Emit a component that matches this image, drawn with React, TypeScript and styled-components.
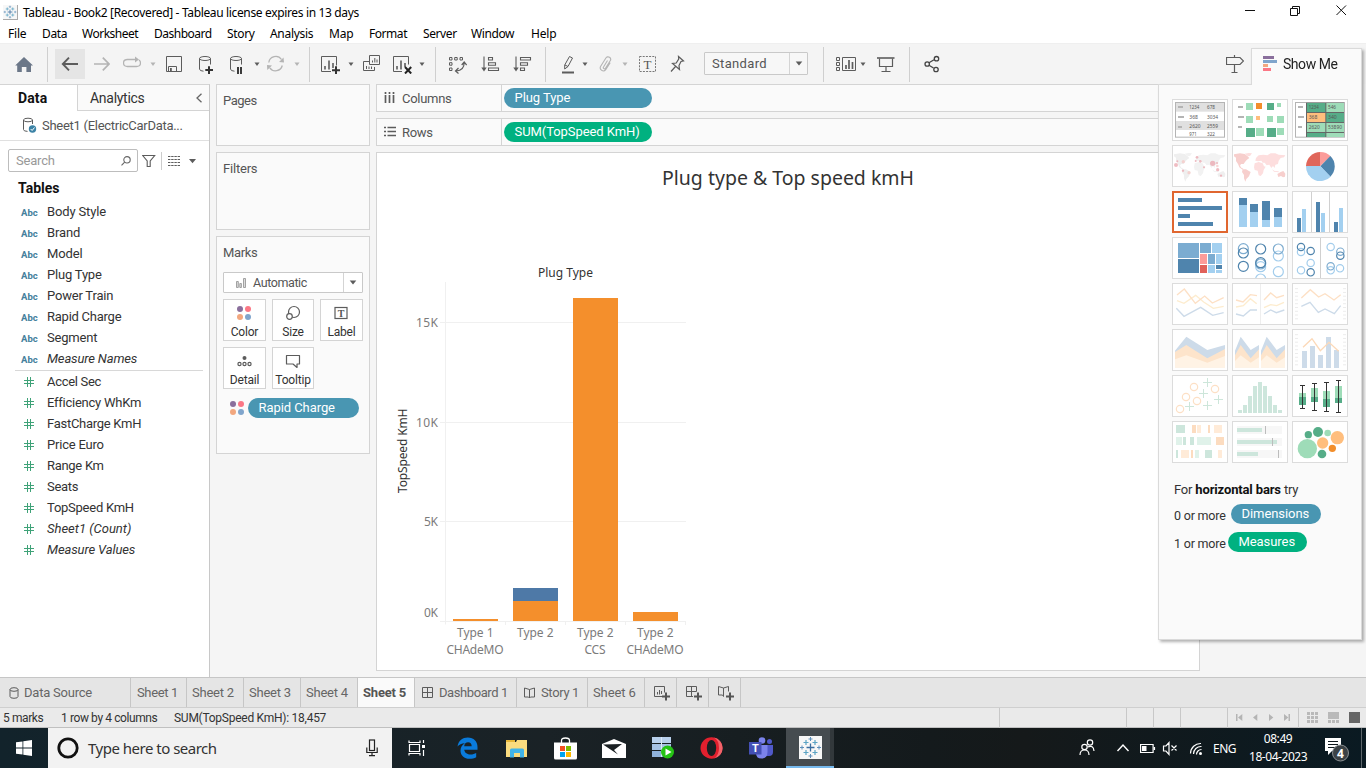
import React from 'react';
import styled, { createGlobalStyle, css } from 'styled-components';

const ui = `Roboto, "Liberation Sans", sans-serif`;
const sys = `"Noto Sans", "Open Sans", sans-serif`;
const line = '#d4d4d4';
const blue = '#4996b2';
const green = '#00b180';

const Global = createGlobalStyle`
  *, *::before, *::after { box-sizing: border-box; }
  body { margin: 0; overflow: hidden; background: #f5f5f5; }
  svg { display: block; flex: none; }
`;

/* ---------- window frame ---------- */
const Window = styled.div`
  position: relative;
  width: 1366px;
  height: 768px;
  display: flex;
  flex-direction: column;
  overflow: hidden;
  font: 13px ${ui};
  color: #333;
  background: #f5f5f5;
`;
const TitleBar = styled.header`
  height: 24px;
  display: flex;
  align-items: center;
  background: #fff;
  padding-left: 3px;
  font: 12px ${sys};
  color: #000;
`;
const TitleText = styled.span`
  margin-left: 5px;
  flex: 1;
  letter-spacing: -0.35px;
`;
const WindowControls = styled.div`
  width: 121px;
`;
const MenuBar = styled.nav`
  height: 19px;
  display: flex;
  align-items: center;
  background: #fff;
  font: 12px ${sys};
  color: #000;
`;
const MenuItem = styled.span<{ $w: number; $ls: number }>`
  width: ${p => p.$w}px;
  white-space: nowrap;
  letter-spacing: ${p => p.$ls}px;
  &:first-child { margin-left: 8px; }
`;

/* ---------- toolbar ---------- */
const ToolbarRow = styled.div`
  height: 41px;
  display: flex;
  align-items: flex-start;
  border-top: 1px solid #efefef;
  background: #f4f4f4;
`;
const Slot = styled.div<{ $gap: number; $w: number }>`
  flex: none;
  margin: 10px 0 0 ${p => p.$gap}px;
  width: ${p => p.$w}px;
  height: 20px;
`;
const Divider = styled.div<{ $gap: number }>`
  flex: none;
  width: 1px;
  height: 35px;
  margin: 3px 0 0 ${p => p.$gap}px;
  background: #cfcfcf;
`;
const ActiveTool = styled.div`
  flex: none;
  width: 30px;
  height: 30px;
  margin: 5px 0 0 7px;
  padding: 5px 5px;
  background: #e5e5e5;
`;
const SelectBox = styled.div<{ $w: number; $h: number; $muted?: boolean }>`
  flex: none;
  display: flex;
  align-items: center;
  width: ${p => p.$w}px;
  height: ${p => p.$h}px;
  border: 1px solid #c9c9c9;
  border-radius: 1px;
  background: ${p => (p.$muted ? '#f7f7f7' : '#fff')};
  color: #555;
`;
const SelectArrow = styled.div<{ $w: number }>`
  width: ${p => p.$w}px;
  height: 100%;
  margin-left: auto;
  display: flex;
  align-items: center;
  justify-content: center;
  border-left: 1px solid ${line};
`;
const StandardSelect = styled(SelectBox)`
  margin: 8px 0 0 19px;
  padding-left: 7px;
  font-size: 13px;
  letter-spacing: 0.35px;
`;

const Icon = ({ box, children, color = '#5c5c5c' }: { box: string; children: React.ReactNode; color?: string }) => {
  const [, , w, h] = box.split(' ');
  return (
    <svg width={w} height={h} viewBox={box} fill="none" stroke={color} strokeWidth="1">
      {children}
    </svg>
  );
};
const Tool = ({ gap, x, w, color, children }: { gap: number; x: number; w: number; color?: string; children: React.ReactNode }) => (
  <Slot $gap={gap} $w={w}>
    <Icon box={`${x} 54 ${w} 20`} color={color}>{children}</Icon>
  </Slot>
);
const Caret = ({ gap, off }: { gap: number; off?: boolean }) => (
  <Slot $gap={gap} $w={6}>
    <svg width="6" height="20" viewBox="0 0 6 20"><path d="M.5 8.5h5l-2.500 3.500z" fill={off ? '#b4b4b4' : '#5c5c5c'} /></svg>
  </Slot>
);
const DownArrow = () => (
  <svg width="8" height="5" viewBox="0 0 8 5"><path d="M.7 .5h6.6l-3.3 4z" fill="#5c5c5c" /></svg>
);

const Toolbar = () => (
  <ToolbarRow>
    <Tool gap={15} x={15} w={18}>
      <path d="M24 57L33 65.4h-2V72h-4.6v-5h-4.6v5h-4.6v-6.6h-2z" fill="#6b7788" stroke="none" />
    </Tool>
    <Divider $gap={14} />
    <ActiveTool>
      <Icon box="60 54 20 20"><path d="M63 64H78M69 57.7L62.8 64l6.2 6.3" strokeWidth="1.9" /></Icon>
    </ActiveTool>
    <Tool gap={9} x={94} w={16} color="#b4b4b4"><path d="M94 64h15M102.8 57.7L109 64l-6.2 6.3" strokeWidth="1.7" /></Tool>
    <Tool gap={13} x={123} w={18} color="#b4b4b4">
      <path d="M139 60q1.500 1 1.500 3q0 3.500-4 3.500h-9q-4 0-4-3.500t4-3.500h9.500" strokeWidth="1.3" />
      <path d="M135 56.500l4 3-4 3z" fill="#b4b4b4" stroke="none" />
    </Tool>
    <Caret gap={9} off />
    <Tool gap={10} x={166} w={16}>
      <path d="M166.500 56.500h15v15h-15zM168.500 71.500v-5h8v5" />
      <path d="M170 68h1.800v3h-1.800z" fill="#5c5c5c" stroke="none" />
    </Tool>
    <Tool gap={17} x={199} w={15}>
      <ellipse cx="205" cy="58.500" rx="5.500" ry="2" />
      <path d="M199.500 58.500V69q0 2 4 2.200M210.500 58.500V64.500" />
      <path d="M205.300 70h7.700M209 66.200v7.700" stroke="#333" strokeWidth="2" />
    </Tool>
    <Tool gap={16} x={230} w={13}>
      <ellipse cx="236" cy="58.500" rx="5.500" ry="2" />
      <path d="M230.500 58.500V69q0 2 4 2.200M241.500 58.500V64.500" />
      <path d="M238 67v7M241 67v7" stroke="#333" strokeWidth="1.900" />
    </Tool>
    <Caret gap={11} />
    <Tool gap={7} x={267} w={18} color="#b4b4b4">
      <path d="M268.800 62.500A7 7 0 0 1 281.500 59.500M282.300 65.500A7 7 0 0 1 269.800 67.800" strokeWidth="1.300" />
      <path d="M283.500 57.500l.5 5-5-.5zM267.300 70l-.3-5 5 .5z" fill="#b4b4b4" stroke="none" />
    </Tool>
    <Caret gap={9} off />
    <Divider $gap={9} />
    <Tool gap={11} x={321} w={20}>
      <path d="M331 71.500h-9.500v-15h15v9" />
      <path d="M325 66v3.500M329 60.500v9M333 63v5" strokeWidth="1.600" />
      <path d="M332 70.200h8M336 66.200v8" stroke="#333" strokeWidth="2" />
    </Tool>
    <Caret gap={7} />
    <Tool gap={9} x={363} w={18}>
      <path d="M369 61.500h-5.500v9h11v-3.500M369.500 55.500h10v9h-10z" />
      <path d="M366.500 66v3M369 66.500v2.500M371.500 66.500v2.500M372.500 60.500v2M374.800 58v4.500M377 59.500v3" />
    </Tool>
    <Tool gap={12} x={393} w={19}>
      <path d="M402 71.500h-8.500v-15h15v8" />
      <path d="M397 66v3.500M401 60.500v9M405 63v4" strokeWidth="1.600" />
      <path d="M405 67l6.200 6.500M411.200 67l-6.200 6.500" stroke="#222" strokeWidth="2" />
    </Tool>
    <Caret gap={7} />
    <Divider $gap={10} />
    <Tool gap={12} x={448} w={19}>
      <path d="M449.500 57.500h2.500v2.500h-2.500zM454.700 57.500h2.500v2.500h-2.500zM460 57.500h2.500v2.500h-2.500zM449.500 62.700h2.500v2.500h-2.500zM449.500 68h2.500v2.500h-2.500z" />
      <path d="M464.200 62.500q0 8-8 8.500M461.700 65l2.500-3 2.500 3M458.500 68l-3 3 3 2.500" strokeWidth="1.200" />
    </Tool>
    <Tool gap={14} x={481} w={19}>
      <path d="M484 56.500V70M488.500 57.500h4v2.500h-4zM488.500 62.700h7v2.500h-7zM488.500 68h10v2.500h-10z" strokeWidth="1.100" />
      <path d="M481.300 67.500h5.400l-2.700 4z" fill="#5c5c5c" stroke="none" />
    </Tool>
    <Tool gap={13} x={513} w={19}>
      <path d="M516 56.500V70M520.500 57.500h10v2.500h-10zM520.500 62.700h7v2.500h-7zM520.500 68h4v2.500h-4z" strokeWidth="1.100" />
      <path d="M513.300 67.500h5.400l-2.700 4z" fill="#5c5c5c" stroke="none" />
    </Tool>
    <Divider $gap={13} />
    <Tool gap={15} x={561} w={14}>
      <path d="M569.500 56.500l3 1.500-4.500 8.500-3.300 2.500v-4zM565 65l3 1.500" />
      <path d="M562 72.500h12" strokeWidth="2" />
    </Tool>
    <Caret gap={7} />
    <Tool gap={10} x={598} w={14} color="#b4b4b4">
      <path d="M607.500 60.500l-4 6.500a1 1 0 0 0 2 1.300l4.700-7.500a2.500 2.500 0 0 0-4.300-2.800l-5.200 8.300a3 3 0 0 0 5 3.300l4.500-7" strokeWidth="1.100" />
    </Tool>
    <Caret gap={10} off />
    <Tool gap={11} x={639} w={18}>
      <rect x="639.500" y="56.500" width="16" height="15" strokeDasharray="2 1.200" stroke="#777" />
      <text x="647.500" y="68.500" textAnchor="middle" fontFamily="Liberation Serif" fontSize="13" fill="#555" stroke="none">T</text>
    </Tool>
    <Tool gap={13} x={670} w={15}>
      <path d="M678.500 56.500l5 4.500-2.500.5-2 4 .5 4-7-6 3.700-.5 2.500-4zM675.500 66.500l-4.500 5" strokeWidth="1.200" />
    </Tool>
    <StandardSelect $w={104} $h={23} $muted>Standard<SelectArrow $w={18}><DownArrow /></SelectArrow></StandardSelect>
    <Divider $gap={15} />
    <Tool gap={11} x={835} w={21}>
      <path d="M836.500 57.500h3v3h-3zM836.500 62.500h3v3h-3zM836.500 67.500h3v3h-3zM842.500 57.500h13v13h-13z" />
      <path d="M846 65v4M849 60v9M852.500 62v7" strokeWidth="1.700" />
    </Tool>
    <Caret gap={4} />
    <Tool gap={10} x={876} w={19}>
      <path d="M877 58h17.500" strokeWidth="1.600" />
      <path d="M879.500 58.500v8h13v-8M886 66.500v5M881.500 71.500h9" strokeWidth="1.200" />
    </Tool>
    <Divider $gap={14} />
    <Tool gap={14} x={924} w={17} color="#444">
      <path d="M929 62.800l5-3M929 65.300l4.500 2.700" strokeWidth="1.300" />
      <circle cx="927.200" cy="64" r="2.200" strokeWidth="1.300" /><circle cx="936.500" cy="58.700" r="2.200" strokeWidth="1.300" /><circle cx="936" cy="69.500" r="2.200" strokeWidth="1.300" />
    </Tool>
    <Tool gap={285} x={1226} w={18}>
      <path d="M1226.500 57.500h13.500l3.500 3.500-3.500 3.500h-13.500zM1234.500 55v2.500M1234.500 64.500v8M1231.500 72.500h6" strokeWidth="1.200" />
    </Tool>
  </ToolbarRow>
);

/* ---------- data pane ---------- */
const Main = styled.main`
  height: 593px;
  display: flex;
`;
const DataPane = styled.aside`
  width: 210px;
  border-right: 1px solid #c8c8c8;
  border-top: 1px solid ${line};
  background: #fff;
  display: flex;
  flex-direction: column;
`;
const PaneTabs = styled.div`
  display: flex;
  height: 26px;
  font-size: 14px;
`;
const DataTab = styled.div`
  width: 77px;
  padding-left: 18px;
  line-height: 26px;
  font-weight: 700;
  color: #111;
  letter-spacing: 0.1px;
`;
const AnalyticsTab = styled.div`
  flex: 1;
  display: flex;
  align-items: center;
  justify-content: space-between;
  border-left: 1px solid ${line};
  border-bottom: 1px solid ${line};
  background: #fafafa;
  padding: 0 6px 0 12px;
  letter-spacing: -0.28px;
`;
const SourceRow = styled.div`
  height: 30px;
  display: flex;
  align-items: center;
  padding-left: 22px;
  gap: 5px;
  border-bottom: 1px solid #e0e0e0;
  font-size: 13px;
  letter-spacing: -0.28px;
  color: #555;
`;
const SearchRow = styled.div`
  display: flex;
  align-items: center;
  padding: 8px 0 0 8px;
  height: 31px;
`;
const SearchBox = styled.div`
  width: 130px;
  height: 23px;
  display: flex;
  align-items: center;
  justify-content: space-between;
  padding: 0 5px 0 7px;
  border: 1px solid #bdbdbd;
  border-radius: 2px;
  color: #999;
  letter-spacing: -0.2px;
`;
const SearchTools = styled.div`
  margin-left: 4px;
`;
const TablesTitle = styled.div`
  margin-top: 7px;
  height: 19px;
  line-height: 19px;
  padding-left: 18px;
  font-size: 14px;
  font-weight: 700;
  color: #111;
`;
const FieldList = styled.div<{ $top?: number }>`
  padding-top: ${p => p.$top ?? 0}px;
`;
const Rule = styled.hr`
  height: 1px;
  border: 0;
  margin: 1px 6px 0 15px;
  background: #d8d8d8;
`;
const Field = styled.div`
  height: 21px;
  display: flex;
  align-items: center;
`;
const FieldName = styled.span<{ $italic?: boolean; $ls: number }>`
  font-style: ${p => (p.$italic ? 'italic' : 'normal')};
  letter-spacing: ${p => p.$ls}px;
  white-space: nowrap;
  color: #333;
`;
const TypeAbc = styled.span`
  width: 26px;
  margin-left: 21px;
  padding-top: 1px;
  font: 700 9.5px ${ui};
  color: #44809c;
`;
const TypeHash = styled.span`
  width: 23px;
  margin-left: 24px;
`;

const dims: [string, number][] = [['Body Style', -0.15], ['Brand', -0.1], ['Model', -0.1], ['Plug Type', -0.2], ['Power Train', -0.2], ['Rapid Charge', -0.25], ['Segment', -0.2], ['Measure Names', -0.15]];
const measures: [string, number][] = [['Accel Sec', -0.3], ['Efficiency WhKm', -0.25], ['FastCharge KmH', -0.28], ['Price Euro', -0.2], ['Range Km', -0.3], ['Seats', -0.3], ['TopSpeed KmH', -0.25], ['Sheet1 (Count)', 0], ['Measure Values', -0.12]];

const Data = () => (
  <DataPane>
    <PaneTabs>
      <DataTab>Data</DataTab>
      <AnalyticsTab>Analytics
        <svg width="8" height="10" viewBox="0 0 8 10"><path d="M6.500 .8L2 5l4.500 4.200" fill="none" stroke="#666" strokeWidth="1.300" /></svg>
      </AnalyticsTab>
    </PaneTabs>
    <SourceRow>
      <Icon box="22 117 15 17">
        <ellipse cx="28" cy="120" rx="4.500" ry="1.800" />
        <path d="M23.500 120v9.500q0 1.800 4 1.900M32.500 120v4" />
        <circle cx="32.500" cy="129" r="3.700" fill="#3c83a6" stroke="none" />
        <path d="M30.700 129l1.400 1.500 2.400-3" stroke="#fff" />
      </Icon>
      Sheet1 (ElectricCarData...
    </SourceRow>
    <SearchRow>
      <SearchBox>Search
        <svg width="12" height="12" viewBox="0 0 12 12" fill="none" stroke="#666" strokeWidth="1.100"><circle cx="7" cy="4.800" r="3.200" /><path d="M4.700 7.200L1.500 10.400" /></svg>
      </SearchBox>
      <SearchTools>
        <Icon box="142 150 56 20">
          <path d="M142.700 154.500h12l-4.500 5.500v5.500h-3v-5.500z" strokeWidth="1.100" />
          <path d="M161.500 151v18" stroke="#ccc" />
          <path d="M168 155.500h12M168 158.500h12M168 161.500h12M168 164.500h12" strokeDasharray="2.400 .8" />
          <path d="M189 158h7l-3.500 4.200z" fill="#5c5c5c" stroke="none" />
        </Icon>
      </SearchTools>
    </SearchRow>
    <TablesTitle>Tables</TablesTitle>
    <FieldList $top={3}>
      {dims.map(([n, ls], i) => <Field key={n}><TypeAbc>Abc</TypeAbc><FieldName $ls={ls} $italic={i === 7}>{n}</FieldName></Field>)}
    </FieldList>
    <Rule />
    <FieldList>
      {measures.map(([n, ls], i) => (
        <Field key={n}>
          <TypeHash><svg width="10" height="11" viewBox="0 0 10 11"><path d="M3.500 1v10M6.500 1v10M0 4.500h10M0 7.500h10" stroke="#3fa278" strokeWidth="1" fill="none" /></svg></TypeHash>
          <FieldName $ls={ls} $italic={i > 6}>{n}</FieldName>
        </Field>
      ))}
    </FieldList>
  </DataPane>
);

/* ---------- cards ---------- */
const Cards = styled.div`
  width: 154px;
  margin-left: 6px;
  display: flex;
  flex-direction: column;
  gap: 6px;
`;
const Card = styled.section<{ $h: number }>`
  height: ${p => p.$h}px;
  border: 1px solid ${line};
  background: #fafafa;
  padding: 7px 6px 0;
`;
const CardTitle = styled.h3<{ $ls: number }>`
  margin: 0;
  height: 16px;
  line-height: 17px;
  font-size: 13px;
  font-weight: 400;
  color: #555;
  letter-spacing: ${p => p.$ls}px;
`;
const MarkSelect = styled(SelectBox)`
  margin: 12px 0 6px;
  padding-left: 12px;
  gap: 7px;
  font-size: 12.500px;
  letter-spacing: -0.4px;
`;
const MarkGrid = styled.div`
  display: grid;
  grid-template-columns: 43px 42px 43px;
  grid-auto-rows: 42px;
  gap: 6px;
`;
const MarkButton = styled.div`
  border: 1px solid ${line};
  background: #fff;
  display: flex;
  flex-direction: column;
  align-items: center;
  justify-content: space-between;
  padding: 4px 0 0;
  font-size: 12px;
  line-height: 15px;
  color: #333;
  white-space: nowrap;
  letter-spacing: -0.2px;
`;
const PillRow = styled.div`
  display: flex;
  align-items: center;
  margin: 9px 0 0 7px;
  gap: 4px;
`;
const Pill = styled.span<{ $w: number; $c: string }>`
  display: inline-block;
  flex: none;
  width: ${p => p.$w}px;
  height: 20px;
  line-height: 19px;
  padding-left: 10.500px;
  border-radius: 10px;
  background: ${p => p.$c};
  color: #fff;
  font-size: 13px;
  white-space: nowrap;
  letter-spacing: -0.07px;
`;
const DotShapes = () => (
  <g>
    <circle cx="3" cy="3" r="3" fill="#8a6f9c" /><circle cx="11" cy="3" r="3" fill="#fb7785" />
    <circle cx="3" cy="11" r="3" fill="#f2a77f" /><circle cx="11" cy="11" r="3" fill="#80a5cc" />
  </g>
);
const MarkIcon = ({ children }: { children: React.ReactNode }) => (
  <svg width="18" height="18" viewBox="0 0 18 18" fill="none" stroke="#5c5c5c" strokeWidth="1.200">{children}</svg>
);

const CardColumn = () => (
  <Cards>
    <Card $h={62}><CardTitle $ls={-0.5}>Pages</CardTitle></Card>
    <Card $h={78}><CardTitle $ls={-0.2}>Filters</CardTitle></Card>
    <Card $h={218}>
      <CardTitle $ls={-0.35}>Marks</CardTitle>
      <MarkSelect $w={140} $h={21}>
        <svg width="10" height="10" viewBox="0 0 10 10" fill="#ddd" stroke="#999" strokeWidth=".9"><path d="M.5 3.500h1.800v6H.5zM3.800 5.500h1.600v4H3.800zM7.500 .5h2v9h-2z" /></svg>
        Automatic
        <SelectArrow $w={19}><DownArrow /></SelectArrow>
      </MarkSelect>
      <MarkGrid>
        <MarkButton><svg width="15" height="18" viewBox="0 -2 15 18"><DotShapes /></svg>Color</MarkButton>
        <MarkButton><MarkIcon><circle cx="10" cy="8" r="5.500" /><circle cx="5.500" cy="12.500" r="2.800" fill="#fff" /></MarkIcon>Size</MarkButton>
        <MarkButton><MarkIcon><rect x="2" y="3.500" width="12" height="11" /><text x="8" y="13" fontSize="10" fontWeight="700" textAnchor="middle" fontFamily="Liberation Serif" fill="#555" stroke="none">T</text></MarkIcon>Label</MarkButton>
        <MarkButton><MarkIcon><circle cx="8.500" cy="6" r="2" fill="#5c5c5c" stroke="none" /><circle cx="3.500" cy="12" r="1.600" /><circle cx="8.500" cy="12" r="1.600" /><circle cx="13.500" cy="12" r="1.600" /></MarkIcon>Detail</MarkButton>
        <MarkButton><MarkIcon><path d="M2.500 3.500h13v8.500h-2.500v3.500l-4-3.500h-6.500z" strokeLinejoin="round" /></MarkIcon>Tooltip</MarkButton>
      </MarkGrid>
      <PillRow><svg width="14" height="14" viewBox="0 0 14 14"><DotShapes /></svg><Pill $w={111} $c={blue}>Rapid Charge</Pill></PillRow>
    </Card>
  </Cards>
);

/* ---------- shelves and view ---------- */
const Work = styled.div`
  width: 824px;
  margin-left: 6px;
  display: flex;
  flex-direction: column;
  gap: 6px;
`;
const Shelf = styled.div`
  height: 28px;
  display: flex;
  align-items: center;
  border: 1px solid ${line};
  background: #fafafa;
`;
const ShelfLabel = styled.div`
  width: 125px;
  height: 26px;
  display: flex;
  align-items: center;
  gap: 6px;
  padding-left: 7px;
  border-right: 1px solid ${line};
  margin-right: 2px;
  color: #555;
  letter-spacing: -0.28px;
`;
const View = styled.div`
  height: 519px;
  border: 1px solid ${line};
  background: #fff;
`;

const bars = [
  { x: 453, y: 619, h: 2, c: '#f48f2c' },
  { x: 513, y: 588, h: 13, c: '#4e79a7' },
  { x: 513, y: 601, h: 20, c: '#f48f2c' },
  { x: 573, y: 298, h: 323, c: '#f48f2c' },
  { x: 633, y: 612, h: 9, c: '#f48f2c' },
];
const Chart = () => (
  <svg width="821" height="517" viewBox="377 153 821 517" fontFamily={sys} fontSize="12" fill="#7b7b7b">
    <text x="662" y="185" fontSize="19.500" fill="#333" textLength="252">Plug type &amp; Top speed kmH</text>
    <text x="538" y="277" fill="#333" textLength="55">Plug Type</text>
    <g stroke="#f0f0f0" strokeWidth="1">
      <path d="M440 322.500H686M440 422.500H686M440 521.500H686M440 621.500H686M445.500 282V624.500M505.500 621v4M565.500 621v4M625.500 621v4M685.500 621v4" />
    </g>
    {bars.map((b, i) => <rect key={i} x={b.x} y={b.y} width="45" height={b.h} fill={b.c} />)}
    <text x="416" y="327" textLength="22">15K</text>
    <text x="416" y="427" textLength="22">10K</text>
    <text x="424" y="526" textLength="14">5K</text>
    <text x="424" y="617" textLength="14">0K</text>
    <text transform="translate(406.500 493) rotate(-90)" fill="#333" textLength="84.500">TopSpeed KmH</text>
    <text x="457" y="637" textLength="36.500">Type 1</text>
    <text x="446.500" y="654" textLength="57">CHAdeMO</text>
    <text x="517" y="637" textLength="36.500">Type 2</text>
    <text x="577" y="637" textLength="36.500">Type 2</text>
    <text x="584.500" y="654" textLength="21">CCS</text>
    <text x="637" y="637" textLength="36.500">Type 2</text>
    <text x="626.500" y="654" textLength="57">CHAdeMO</text>
  </svg>
);

/* ---------- show me ---------- */
const ShowMe = styled.div`
  position: absolute;
  left: 1158px;
  top: 48px;
  width: 204px;
  height: 592px;
  display: flex;
  flex-direction: column;
  filter: drop-shadow(2px 2px 1.500px rgba(0, 0, 0, 0.3));
`;
const ShowMeTab = styled.div`
  align-self: flex-end;
  position: relative;
  z-index: 1;
  width: 111px;
  height: 37px;
  margin-bottom: -1px;
  border: 1px solid #dadada;
  border-bottom: 0;
  background: #fafafa;
  display: flex;
  align-items: center;
  padding: 0 0 6px 11px;
  gap: 5px;
  font-size: 14px;
  letter-spacing: -0.45px;
  color: #222;
`;
const ShowMeBody = styled.div`
  height: 556px;
  border: 1px solid #dadada;
  background: #fafafa;
  padding: 14px 13px 0;
`;
const ThumbGrid = styled.div`
  display: grid;
  grid-template-columns: repeat(3, 56px);
  grid-auto-rows: 42px;
  gap: 4px;
`;
const Thumb = styled.div<{ $on?: boolean }>`
  border: 1px solid #dcdcdc;
  background: #fff;
  ${p => p.$on && css`
    border-color: #e0662f;
    box-shadow: inset 0 0 0 1px #e0662f;
  `}
`;
const HintLine = styled.p<{ $mt: number }>`
  margin: ${p => p.$mt}px 0 0 2px;
  height: 20px;
  display: flex;
  align-items: center;
  white-space: pre;
  font-size: 13px;
  color: #333;
  letter-spacing: -0.2px;
  b { color: #111; letter-spacing: -0.14px; }
`;
const HintText = styled.span<{ $w: number }>`
  width: ${p => p.$w}px;
  padding-top: 3px;
  font-size: 12.500px;
`;

const D = '#4f84ad', L = '#a3d0f0', DG = '#56ad88', LG = '#9edcb8', OR = '#f28e2b', LO = '#ffbe7d';
const R = ({ a, c }: { a: [number, number, number, number][]; c: string }) => (
  <g fill={c}>{a.map((r, i) => <rect key={i} x={r[0]} y={r[1]} width={r[2] - r[0]} height={r[3] - r[1]} />)}</g>
);
const Rings = ({ a, c, r = 15 }: { a: [number, number][]; c: string; r?: number }) => (
  <g fill="none" stroke={c} strokeWidth="3.600">{a.map((p, i) => <circle key={i} cx={p[0]} cy={p[1]} r={r} />)}</g>
);
const Line = ({ d, c }: { d: string; c: string }) => <path d={d} fill="none" stroke={c} strokeWidth="4" />;
const land = [
  'M252 463l18-3 14 2 8 6 6 6-8 6-5 6-4 6-8 0-3 5 4 6 6 3-2 3-10-7-4-10-6-9 0-10-6-4z',
  'M278 508l10 0 14 8-5 13-8 8-3 8-4-10 0-10-6-9z', 'M284 461l12-2 10 1-6 8-6 1z',
  'M314 490l12-4 12 4 4 9 5 1-6 10-2 10-7 8-6-2-3-14-9-2-2-8z',
  'M316 482l2-8 8-8 14-2 12 2 10-6 14 0 10 4 20 2-4 6-10 2-6 8-2 10-8 2-2 10-5-6-5 6-6-10-8 2-6-8-6 0-4-6-10 2z',
  'M382 522l10-6 8-3 6 8-1 9-6 2-6-4-8 3z', 'M366 508l8 5 12 1 0 3-14-2z',
];
const World = ({ x, c, d }: { x: number; c: string; d: string }) => (
  <g transform={`translate(${x} 0)`}>{land.map((p, i) => <path key={i} d={p} fill={i < 2 || i === 5 ? d : c} />)}</g>
);
const Num = ({ x, y, children, w = 30, c = '#555' }: { x: number; y: number; children: string; w?: number; c?: string }) => (
  <text x={x} y={y} fontSize="17" textLength={w} lengthAdjust="spacingAndGlyphs" fontFamily={sys} fill={c}>{children}</text>
);
const ticks = (x: number, y0: number) => Array.from({ length: 9 }, (_, i) => `M${x} ${y0 + i * 11.3}h9`).join('');

const thumbs: { box: [number, number]; on?: boolean; art: React.ReactNode }[] = [
  { box: [66, 297], art: <>
    <rect x="76.500" y="307.500" width="147" height="104" fill="#fff" stroke="#b4b4b4" strokeWidth="3" />
    <R c="#e0e0e0" a={[[78, 309, 222, 335], [78, 363, 222, 390]]} />
    <R c="#b4b4b4" a={[[84, 318, 99, 324], [84, 348, 102, 354], [84, 378, 96, 384]]} />
    <Num x={118} y={328}>1234</Num><Num x={171} y={328} w={24}>678</Num>
    <Num x={118} y={356} w={26}>368</Num><Num x={171} y={356} w={33}>3034</Num>
    <Num x={118} y={383} w={34}>2620</Num><Num x={171} y={383} w={33}>2559</Num>
    <Num x={118} y={407} w={22}>971</Num><Num x={171} y={407} w={24}>322</Num>
  </> },
  { box: [246, 297], art: <>
    <R c="#b4b4b4" a={[[264, 318, 279, 324], [264, 348, 282, 354], [264, 378, 276, 384]]} />
    <R c={LG} a={[[288, 309, 309, 330], [381, 309, 393, 321], [288, 348, 309, 369], [351, 348, 369, 366], [381, 348, 402, 369], [318, 384, 342, 408], [381, 384, 402, 405]]} />
    <R c={DG} a={[[351, 309, 372, 330], [288, 384, 315, 411], [351, 384, 378, 411]]} />
    <R c={OR} a={[[318, 309, 336, 327]]} /><R c={LO} a={[[318, 348, 330, 360]]} />
  </> },
  { box: [426, 297], art: <>
    <rect x="436.500" y="307.500" width="147" height="104" fill="#fff" stroke="#b4b4b4" strokeWidth="3" />
    <R c="#b4b4b4" a={[[444, 318, 459, 324], [444, 348, 462, 354], [444, 378, 456, 384]]} />
    <R c="#666" a={[[468, 308, 582, 411]]} />
    <R c={DG} a={[[471, 309, 526, 336], [529, 339, 582, 366], [471, 399, 526, 411]]} />
    <R c={LG} a={[[529, 309, 582, 336], [471, 369, 526, 396], [529, 369, 582, 396], [529, 399, 582, 411]]} />
    <R c={LO} a={[[471, 339, 526, 366]]} />
    <Num x={476} y={327}>1234</Num><Num x={534} y={327} w={24}>546</Num>
    <Num x={476} y={358} w={26}>368</Num><Num x={534} y={358} w={26}>340</Num>
    <Num x={476} y={388} w={33}>2620</Num><Num x={534} y={388} w={42}>53890</Num>
  </> },
  { box: [66, 435], art: <>
    <World x={-180} c="#f2f2f2" d="#efefef" />
    <g fill="#e9a6ae" fillOpacity=".75"><circle cx="78" cy="495" r="6" /><circle cx="82" cy="484" r="3" /><circle cx="188" cy="490" r="8" /><circle cx="203" cy="509" r="5" /><circle cx="141" cy="472" r="4" /><circle cx="151" cy="484" r="4" /><circle cx="137" cy="483" r="3" /><circle cx="99" cy="512" r="3.500" /><circle cx="162" cy="502" r="3" /><circle cx="213" cy="527" r="3.500" /><circle cx="201" cy="489" r="3" /></g>
    <g fill="#f6c6c3" fillOpacity=".7"><circle cx="100" cy="485" r="5" /><circle cx="117" cy="518" r="5" /><circle cx="202" cy="498" r="4" /></g>
  </> },
  { box: [246, 435], art: <World x={0} c="#fddede" d="#f7cfcd" /> },
  { box: [426, 435], art: <>
    <path d="M511 499V456A43 43 0 0 0 468 497L468 499z" fill="#e0665a" />
    <path d="M510 499V456A43 43 0 0 1 542 469z" fill="#fc9c9a" />
    <path d="M511 499L541 468A43 43 0 0 1 541 530z" fill={D} />
    <path d="M511 498L542 530A43 43 0 0 1 468 498z" fill={L} />
  </> },
  { box: [66, 573], on: true, art: <R c={D} a={[[84, 594, 156, 606], [84, 618, 216, 630], [84, 642, 120, 654], [84, 666, 189, 678]]} /> },
  { box: [246, 573], art: <>
    <R c={D} a={[[267, 594, 291, 615], [300, 612, 324, 636], [336, 603, 360, 660], [372, 624, 396, 651]]} />
    <R c={L} a={[[267, 615, 291, 681], [300, 636, 324, 681], [336, 660, 360, 681], [372, 651, 396, 681]]} />
  </> },
  { box: [426, 573], art: <>
    <R c="#d0d0d0" a={[[483, 576, 486, 696], [537, 576, 540, 696]]} />
    <R c={D} a={[[441, 654, 453, 696], [498, 606, 510, 696], [552, 666, 564, 696]]} />
    <R c={L} a={[[456, 627, 468, 696], [513, 639, 525, 696], [567, 624, 579, 696]]} />
  </> },
  { box: [66, 21], art: <>
    <R c="#7bacd1" a={[[84, 39, 147, 84], [150, 39, 183, 69], [174, 72, 195, 102]]} />
    <R c={D} a={[[84, 87, 147, 129], [198, 105, 216, 117]]} />
    <R c={L} a={[[186, 39, 216, 69], [198, 72, 216, 102], [174, 105, 195, 129], [198, 120, 216, 129]]} />
    <R c="#fc9c9a" a={[[150, 72, 171, 102]]} /><R c="#e0615a" a={[[150, 105, 171, 129]]} />
  </> },
  { box: [246, 21], art: <>
    <Rings c="#a3cdec" a={[[385, 78], [385, 125], [332, 147], [332, 110]]} />
    <Rings c="#7fadd0" a={[[280, 56], [385, 57], [332, 102]]} />
    <Rings c={D} a={[[280, 69], [280, 109], [332, 57], [332, 98]]} />
  </> },
  { box: [426, 21], art: <>
    <R c="#d0d0d0" a={[[510, 24, 513, 144]]} />
    <Rings r={11} c="#a3cdec" a={[[453, 66], [453, 121], [482, 99], [542, 51], [570, 115], [542, 121]]} />
    <Rings r={11} c="#7fadd0" a={[[571, 65], [542, 109]]} />
    <Rings r={11} c={D} a={[[453, 51], [482, 63], [482, 127], [571, 77]]} />
  </> },
  { box: [66, 159], art: <>
    <Line c="#fdecce" d="M81 212l21 8 35-24 24 20 29 19 31-6" /><Line c="#fde0c5" d="M81 195l22-18 33 43 28-22 23 21 34-16" /><Line c="#cddbe9" d="M79 235l23 24 50-27 36 24 33-8" />
  </> },
  { box: [246, 159], art: <>
    <R c="#eee" a={[[330, 162, 333, 282]]} />
    <Line c="#fde0c5" d="M258 210l21 6 22-22 20 3M342 210l20-21 18 14 22-7" /><Line c="#fdecce" d="M258 231l22-4 21-21 19 15M342 233l20-9 18 3 22-10" /><Line c="#cddbe9" d="M258 252l22 6 21-18h20M342 252l20-12 17 8 24-8" />
  </> },
  { box: [426, 159], art: <>
    <path d={ticks(435, 176) + ticks(579, 176)} stroke="#ececec" strokeWidth="3" />
    <Line c="#fde0c5" d="M454 204l27-25 25 22 19-10 27 19 20-16" /><Line c="#cddbe9" d="M454 229l26-12 25 30 20-10 28 14 19-24" />
  </> },
  { box: [66, 297], art: <>
    <path d="M75 362L109 320l63 40 53-15v67H75z" fill="#cddbe9" /><path d="M75 366L109 345l63 40 53-28v55H75z" fill="#fde4cb" /><path d="M75 388L109 376l63 22 53-20v35H75z" fill="#fff3e5" />
  </> },
  { box: [246, 297], art: <>
    <path d="M255 362L272 320l30 40 25-15v67H255zM333 362L350 320l30 40 25-15v67H333z" fill="#cddbe9" /><path d="M255 376L272 345l30 40 25-27v54H255zM333 376L350 345l30 40 25-27v54H333z" fill="#fde4cb" /><path d="M255 393L272 376l30 22 25-16v31H255zM333 393L350 376l30 22 25-16v31H333z" fill="#fff3e5" />
  </> },
  { box: [426, 297], art: <>
    <path d={ticks(435, 314) + ticks(579, 314)} stroke="#ececec" strokeWidth="3" />
    <R c="#cddbe9" a={[[456, 363, 471, 414], [480, 348, 495, 414], [504, 375, 519, 414], [528, 321, 543, 414], [552, 360, 567, 414]]} />
    <Line c="#fcd9b8" d="M459 352l27-26 25 36 26-25 29 27" />
  </> },
  { box: [66, 435], art: <>
    <Rings r={11} c="#fde0c5" a={[[132, 471], [195, 477], [108, 501], [141, 513], [90, 537]]} />
    <path d="M159 457.500h27M172.500 444v27M147 490.500h27M160.500 477v27M105 529.500h27M118.500 516v27M159 526.500h27M172.500 513v27M192 508.500h27M205.500 495v27" stroke="#cde6da" strokeWidth="3" />
  </> },
  { box: [246, 435], art: <R c="#cde6dc" a={[[264, 540, 276, 549], [279, 525, 291, 549], [294, 498, 306, 549], [309, 468, 321, 549], [324, 456, 336, 549], [339, 468, 351, 549], [354, 498, 366, 549], [369, 525, 381, 549], [384, 540, 396, 549]]} /> },
  { box: [426, 435], art: <>
    <R c={LG} a={[[447, 489, 468, 501], [483, 474, 504, 501], [519, 483, 540, 507], [555, 468, 576, 504]]} />
    <R c={DG} a={[[447, 501, 468, 525], [483, 501, 504, 516], [519, 507, 540, 531], [555, 504, 576, 519]]} />
    <path d="M457.500 466v70M450 466.500h15M450 535.500h15M493.500 460v82M486 460.500h15M486 541.500h15M529.500 457v87M522 457.500h15M522 544.500h15M565.500 451v96M558 451.500h15M558 547.500h15" stroke="#333" strokeWidth="3" />
  </> },
  { box: [66, 573], art: <>
    <R c="#cde6dc" a={[[78, 585, 105, 609], [99, 621, 108, 645], [120, 621, 132, 645], [78, 660, 84, 684], [165, 660, 186, 684]]} />
    <R c="#e0f2ea" a={[[78, 621, 96, 645], [141, 621, 183, 645], [135, 660, 147, 684]]} />
    <R c="#fcdcc0" a={[[126, 585, 138, 609], [174, 585, 180, 609], [198, 621, 222, 645], [123, 660, 129, 684]]} />
    <R c="#ffebd8" a={[[141, 585, 153, 609], [192, 585, 216, 609], [93, 660, 117, 684], [204, 660, 216, 684]]} />
  </> },
  { box: [246, 573], art: <>
    <R c="#f7f7f7" a={[[261, 588, 396, 612], [261, 624, 396, 648], [261, 660, 396, 684]]} />
    <R c="#cde6dc" a={[[261, 594, 336, 606], [261, 630, 381, 642], [261, 666, 324, 678]]} />
    <R c="#bcbcbc" a={[[345, 588, 348, 612], [366, 624, 369, 648], [384, 660, 387, 684]]} />
  </> },
  { box: [426, 573], art: <>
    <g fill={DG}><circle cx="475" cy="614" r="11" /><circle cx="504" cy="606" r="15" /><circle cx="516" cy="672" r="13" /></g>
    <g fill={LG}><circle cx="472" cy="656" r="29" /><circle cx="533" cy="609" r="10" /></g>
    <g fill={LO}><circle cx="562" cy="623" r="20" /><circle cx="518" cy="639" r="17" /></g><circle cx="547" cy="655" r="11" fill={OR} />
  </> },
];

const ShowMePanel = () => (
  <ShowMe>
    <ShowMeTab>
      <svg width="15" height="16" viewBox="0 0 15 16"><path d="M0 0h11v3H0z" fill="#8a6f9c" /><path d="M0 4h14v3H0z" fill="#80a5cc" /><path d="M0 8h5v3H0z" fill="#f2a77f" /><path d="M0 12h8v3H0z" fill="#fb7785" /></svg>
      Show Me
    </ShowMeTab>
    <ShowMeBody>
      <ThumbGrid>
        {thumbs.map((t, i) => (
          <Thumb key={i} $on={t.on}>
            <svg width="54" height="40" viewBox={`${t.box[0] + 3} ${t.box[1] + 3} 162 120`}>{t.art}</svg>
          </Thumb>
        ))}
      </ThumbGrid>
      <HintLine $mt={16}>For <b>horizontal bars</b> try</HintLine>
      <HintLine $mt={5}><HintText $w={57}>0 or more</HintText><Pill $w={90} $c={blue}>Dimensions</Pill></HintLine>
      <HintLine $mt={8}><HintText $w={54}>1 or more</HintText><Pill $w={79} $c={green}>Measures</Pill></HintLine>
    </ShowMeBody>
  </ShowMe>
);

/* ---------- sheet tabs and status ---------- */
const TabStrip = styled.div`
  height: 31px;
  display: flex;
  border-top: 1px solid #c6c6c6;
  border-bottom: 1px solid #cfcfcf;
  background: #e5e5e5;
`;
const SheetTab = styled.div<{ $w: number; $on?: boolean; $pl?: number; $ls?: number }>`
  width: ${p => p.$w}px;
  flex: none;
  display: flex;
  align-items: center;
  padding-left: ${p => p.$pl ?? 6}px;
  gap: 5px;
  border-right: 1px solid #c6c6c6;
  color: #666;
  white-space: nowrap;
  letter-spacing: ${p => p.$ls ?? -0.22}px;
  ${p => p.$on && css`
    background: #fafafa;
    font-weight: 700;
    color: #555;
    padding-bottom: 1px;
  `}
`;
const StatusBar = styled.div`
  height: 20px;
  display: flex;
  align-items: center;
  background: #eaeaea;
  border-bottom: 1px solid #c0c0c0;
  padding-left: 3px;
  font-size: 12px;
  color: #333;
`;
const StatusText = styled.span<{ $w: number; $ls: number }>`
  width: ${p => p.$w}px;
  letter-spacing: ${p => p.$ls}px;
  white-space: nowrap;
`;
const StatusCell = styled.div<{ $w: number }>`
  width: ${p => p.$w}px;
  height: 20px;
  border-left: 1px solid #c8c8c8;
`;
const GridGlyph = () => <path d="M.5 .5h10v10H.5zM5.500 .5v10M.5 5.500h10" />;
const BookGlyph = () => <path d="M.5 1l5 1.500 5-1.500v9h-4l-1 1-1-1h-4zM5.500 2.500v8.500" />;
const plus = <path d="M8 11.500h8M12 7.500v8" stroke="#555" strokeWidth="2" />;
const TabIcon = ({ w = 12, children }: { w?: number; children: React.ReactNode }) => (
  <svg width={w} height={w > 12 ? 16 : 12} viewBox={`0 0 ${w} ${w > 12 ? 16 : 12}`} fill="none" stroke="#5c5c5c">{children}</svg>
);

const Tabs = () => (
  <TabStrip>
    <SheetTab $w={131} $pl={9}><TabIcon w={10}><ellipse cx="5" cy="2.500" rx="4" ry="1.800" /><path d="M1 2.500v7q0 1.800 4 1.800t4-1.800v-7" /></TabIcon>Data Source</SheetTab>
    <SheetTab $w={56} $ls={-0.35}>Sheet 1</SheetTab>
    <SheetTab $w={57} $pl={5}>Sheet 2</SheetTab>
    <SheetTab $w={57} $pl={5}>Sheet 3</SheetTab>
    <SheetTab $w={57} $pl={5}>Sheet 4</SheetTab>
    <SheetTab $w={57} $pl={5} $on $ls={-0.2}>Sheet 5</SheetTab>
    <SheetTab $w={102} $pl={7} $ls={-0.42}><TabIcon><GridGlyph /></TabIcon>Dashboard 1</SheetTab>
    <SheetTab $w={71} $pl={7} $ls={-0.35}><TabIcon><BookGlyph /></TabIcon>Story 1</SheetTab>
    <SheetTab $w={57} $pl={5} $ls={-0.12}>Sheet 6</SheetTab>
    <SheetTab $w={32} $pl={9}><TabIcon w={16}><path d="M8 11.500H.5v-10h10v6M3.500 7v2.500M5.500 5v4.500M7.500 6v3" />{plus}</TabIcon></SheetTab>
    <SheetTab $w={32} $pl={9}><TabIcon w={16}><path d="M7 11.500H.5v-10h10v5M5.500 1.500v10M.5 6.500h10" />{plus}</TabIcon></SheetTab>
    <SheetTab $w={32} $pl={9}><TabIcon w={16}><path d="M.5 1.500l5 1.500 5-1.500v5M.5 1.500v8.500h4l1 1.500v-8.500" />{plus}</TabIcon></SheetTab>
  </TabStrip>
);
const Status = () => (
  <StatusBar>
    <StatusText $w={58} $ls={-0.4}>5 marks</StatusText>
    <StatusText $w={113} $ls={-0.4}>1 row by 4 columns</StatusText>
    <StatusText $w={825} $ls={-0.26}>SUM(TopSpeed KmH): 18,457</StatusText>
    <StatusCell $w={127} /><StatusCell $w={27} /><StatusCell $w={27} /><StatusCell $w={47} />
    <StatusCell $w={71}>
      <svg width="70" height="19" viewBox="1228 708 70 19" fill="#b4b4b4"><path d="M1236 714h1.500v7H1236zM1242.300 714v7l-4.300-3.500zM1257.300 714v7l-4.300-3.500zM1269 714v7l4.300-3.500zM1284 714v7l4.300-3.500zM1288.500 714h1.500v7h-1.500z" /></svg>
    </StatusCell>
    <StatusCell $w={68}>
      <svg width="67" height="19" viewBox="1299 708 67 19" fill="#b9b9b9">
        {[0, 4, 8].map(x => [0, 4, 8].map(y => <rect key={`${x}-${y}`} x={1307 + x} y={712 + y} width="3" height="3" />))}
        <path d="M1328 712h11v7h-11zM1328 720h3v3h-3zM1332 720h3v3h-3zM1336 720h3v3h-3z" />
        <path d="M1349 712h11v11h-11z" fill="#666" />
      </svg>
    </StatusCell>
  </StatusBar>
);

/* ---------- taskbar ---------- */
const Taskbar = styled.footer`
  height: 40px;
  display: flex;
  background: linear-gradient(90deg, #12232b 0%, #1a2226 40%, #141a1c 68%, #15191a 75%, #0a1a22 100%);
  font: 12px ${sys};
  color: #fff;
`;
const StartButton = styled.div`
  width: 48px;
  padding: 12px 0 0 16px;
`;
const TaskSearch = styled.div`
  width: 344px;
  display: flex;
  align-items: center;
  padding: 0 14px 0 9px;
  background: #f2f2f2;
  font-size: 15px;
  color: #333;
`;
const TaskSearchText = styled.span`
  flex: 1;
  margin-left: 9px;
  letter-spacing: -0.5px;
`;
const TaskApp = styled.div<{ $on?: boolean; $w?: number }>`
  width: ${p => p.$w ?? 49}px;
  height: 40px;
  display: flex;
  align-items: center;
  justify-content: center;
  ${p => p.$on && css`
    background: #464c50;
    border-bottom: 2px solid #76b9ed;
    box-shadow: inset -4px 0 #32383b;
  `}
`;
const Tray = styled.div`
  margin-left: auto;
  display: flex;
  align-items: center;
`;
const Clock = styled.div`
  width: 58px;
  margin: 0 5px 0 12px;
  text-align: center;
  line-height: 18px;
  letter-spacing: -0.45px;
  white-space: nowrap;
`;
const Lang = styled.span`
  width: 24px;
  letter-spacing: -0.5px;
`;
const ShowDesktop = styled.div`
  width: 5px;
  height: 40px;
  margin-left: 7px;
  border-left: 1px solid #5d666b;
`;

const TableauMark = ({ s }: { s: number }) => (
  <svg width={s} height={s} viewBox="0 0 23 23" fill="none">
    <rect width="23" height="23" fill="#f7f7f7" />
    <path d="M11.500 7.500v8M7.500 11.500h8" stroke="#3a6ea0" strokeWidth="1.300" />
    <path d="M7 4v5M4.500 6.500h5M16 4v5M13.500 6.500h5M7 14v5M4.500 16.500h5M16 14v5M13.500 16.500h5" stroke="#5aa3c4" strokeWidth="1.200" />
    <path d="M11.500 1v4M9.500 3h4M11.500 18v4M9.500 20h4M3 9.500v4M1 11.500h4M20 9.500v4M18 11.500h4" stroke="#5c8fba" strokeWidth="1" />
  </svg>
);
const AppIcon = styled.div`
  border-right: 1px solid #aaa;
  border-bottom: 1px solid #aaa;
`;

const Windows = () => (
  <Taskbar>
    <StartButton><svg width="16" height="16" viewBox="0 0 16 16" fill="#fff"><path d="M0 2.300l6.500-.9v6.200H0zM7.300 1.300L16 0v7.600H7.300zM0 8.400h6.500v6.200L0 13.700zM7.300 8.400H16V16l-8.700-1.300z" /></svg></StartButton>
    <TaskSearch>
      <svg width="22" height="22" viewBox="0 0 22 22"><circle cx="11" cy="11" r="9.200" fill="none" stroke="#111" strokeWidth="2.800" /></svg>
      <TaskSearchText>Type here to search</TaskSearchText>
      <svg width="12" height="18" viewBox="0 0 12 18" fill="none" stroke="#222" strokeWidth="1.200"><rect x="3.500" y="1" width="5" height="10.500" /><path d="M.8 8.500v5h10.400v-5M6 13.500v3M3 16.700h6" /></svg>
    </TaskSearch>
    <TaskApp $w={50}><svg width="18" height="16" viewBox="0 0 18 16" fill="none" stroke="#fff" strokeWidth="1.200"><path d="M1.500 4.500h10v7h-10zM1 .5v2h11v-2M1 15.500v-2h11v2M15.500 0v3M15.500 10v6" /><path d="M14 5h3v3h-3z" fill="#fff" stroke="none" /></svg></TaskApp>
    <TaskApp $w={50}><svg width="21" height="22" viewBox="0 0 21 22"><path d="M.5 9.500C1.500 3.500 5.500 .5 10.800 .5c6 0 9.700 4 9.700 9.500v2.800H7.200c.4 3.200 3.200 4.700 6.500 4.700 2 0 4-.6 5.500-1.500v4.300c-1.800 1-4.200 1.500-6.500 1.500-5.500 0-9.200-3.300-9.200-8.300 0-3.300 1.700-6 4.500-7.300C4.500 6.500 2 7.500 .5 9.500zM7.200 9.200h7.500c0-2.700-1.500-4-3.600-4-2.200 0-3.700 1.600-3.900 4z" fill="#0a7bdb" /></svg></TaskApp>
    <TaskApp><svg width="22" height="19" viewBox="0 0 22 19"><path d="M0 1h9v4H0z" fill="#e9b839" /><path d="M0 3h10l1-2h10v17H0z" fill="#fbdc7f" /><path d="M4 18.500V11q0-1.500 1.500-1.500h11q1.500 0 1.500 1.500v7.500h-4V14H8v4.500z" fill="#42b4e8" /></svg></TaskApp>
    <TaskApp $w={48}><svg width="23" height="23" viewBox="0 0 23 23"><path d="M7.500 7V3.500q0-2.500 4-2.500t4 2.500V7" fill="none" stroke="#fff" strokeWidth="1.300" /><path d="M0 5.500h23V21q0 1.500-1.500 1.500h-20Q0 22.500 0 21z" fill="#fff" /><path d="M6 9h5v5H6z" fill="#f25022" /><path d="M12 9h5v5h-5z" fill="#7fba00" /><path d="M6 15h5v5H6z" fill="#00a4ef" /><path d="M12 15h5v5h-5z" fill="#ffb900" /></svg></TaskApp>
    <TaskApp><svg width="24" height="19" viewBox="0 0 24 19"><path d="M0 5L12 0l12 5v14H0z" fill="#fff" /><path d="M1 5.500L20 5l-8 6 4 4.500z" fill="#1a2023" /></svg></TaskApp>
    <TaskApp><svg width="22" height="22" viewBox="0 0 22 22"><rect width="19" height="6" fill="#b8d0ec" /><rect y="7" width="19" height="6" fill="#a5c2e4" /><rect y="14" width="19" height="6" fill="#8fb2db" /><path d="M9.500 0v20" stroke="#dce9f7" /><circle cx="15.500" cy="15" r="6.500" fill="#25c414" /><path d="M13.500 11.500l6 3.500-6 3.500z" fill="#fff" /></svg></TaskApp>
    <TaskApp><svg width="23" height="22" viewBox="0 0 23 22"><ellipse cx="11.500" cy="11" rx="11" ry="10.700" fill="#e2202e" /><path d="M14 .6A11 10.700 0 0 1 14 21.500q5-3 5-10.500T14 .6z" fill="#f2636a" /><ellipse cx="11.500" cy="11" rx="4.700" ry="8" fill="#1a2023" /></svg></TaskApp>
    <TaskApp $w={50}><svg width="24" height="22" viewBox="0 0 24 22"><circle cx="13" cy="3.500" r="3.300" fill="#7b83eb" /><circle cx="20.500" cy="4.500" r="2.500" fill="#5059c9" /><path d="M15 8h9v7q0 4-4 4h-3z" fill="#5059c9" /><path d="M7 8h11.500v7q0 6.500-6 6.500T7 15z" fill="#7b83eb" /><rect y="5" width="12.500" height="12.500" fill="#4450b5" /><text x="6.300" y="15.300" fontSize="11" fontWeight="700" fontFamily={ui} textAnchor="middle" fill="#fff">T</text></svg></TaskApp>
    <TaskApp $on $w={48}><TableauMark s={23} /></TaskApp>
    <Tray>
      <svg width="134" height="24" viewBox="1079 736 134 24" fill="none" stroke="#fff" strokeWidth="1.200">
        <circle cx="1084.500" cy="747" r="2.700" /><path d="M1080 755q0-5 4.500-5t4.500 5" /><circle cx="1090" cy="742.500" r="2.700" /><path d="M1087.500 747q6-2.500 6.500 4" />
        <path d="M1117.500 751l5.500-6 5.500 6" strokeWidth="1.400" />
        <path d="M1140.600 744.500h12.500v8h-12.500zM1154.500 747v3" /><path d="M1142 746h4.500v5H1142z" fill="#fff" stroke="none" />
        <path d="M1163.500 746h2.500l3-3.500v12l-3-3.500h-2.500zM1171.500 745.500l5 5M1176.500 745.500l-5 5" />
        <path d="M1190.500 753.500a10 10 0 0 1 10.500-10M1193.500 754a7.500 7.500 0 0 1 8-7.500M1196.500 754.500a5 5 0 0 1 5-5" /><circle cx="1200.500" cy="753.500" r="1.500" fill="#fff" stroke="none" />
      </svg>
      <Lang>ENG</Lang>
      <Clock>08:49<br />18-04-2023</Clock>
      <svg width="42" height="28" viewBox="1312 736 42 28">
        <path d="M1325 740h16v13h-9l-4 4v-4h-3z" fill="#fff" /><path d="M1328 743.500h10M1328 746.500h10M1328 749.500h7" stroke="#10191d" />
        <circle cx="1340.500" cy="755" r="8" fill="#3c4245" stroke="#8a8f92" /><text x="1340.500" y="759.500" textAnchor="middle" fontSize="12" fontWeight="700" fill="#fff">4</text>
      </svg>
      <ShowDesktop />
    </Tray>
  </Taskbar>
);

const menus: [string, number, number][] = [['File', 34, -0.2], ['Data', 40, -0.35], ['Worksheet', 72, -0.5], ['Dashboard', 73, -0.5], ['Story', 43, -0.35], ['Analysis', 59, -0.3], ['Map', 40, -0.2], ['Format', 54, -0.45], ['Server', 48, -0.4], ['Window', 60, -0.4], ['Help', 40, -0.2]];

export default function App() {
  return (
    <>
      <Global />
      <Window>
        <TitleBar>
          <AppIcon><TableauMark s={14} /></AppIcon>
          <TitleText>Tableau - Book2 [Recovered] - Tableau license expires in 13 days</TitleText>
          <WindowControls>
            <Icon box="1245 4 110 16" color="#111"><path d="M1245 10.500h10M1290.500 8.500h7v7h-7zM1292.500 8.500v-2h7v7h-2M1336.500 5.500l9.500 9.500M1346 5.500l-9.500 9.500" /></Icon>
          </WindowControls>
        </TitleBar>
        <MenuBar>{menus.map(([m, w, ls]) => <MenuItem key={m} $w={w} $ls={ls}>{m}</MenuItem>)}</MenuBar>
        <Toolbar />
        <Main>
          <Data />
          <CardColumn />
          <Work>
            <Shelf>
              <ShelfLabel><Icon box="383 91 12 14"><path d="M384.500 92v2M388.500 92v2M392.500 92v2M384.500 95v8M388.500 95v8M392.500 95v8" strokeWidth="1.700" /></Icon>Columns</ShelfLabel>
              <Pill $w={148} $c={blue}>Plug Type</Pill>
            </Shelf>
            <Shelf>
              <ShelfLabel><Icon box="383 125 12 14"><path d="M383 127.500h2M383 131.500h2M383 135.500h2M386.500 127.500h8.500M386.500 131.500h8.500M386.500 135.500h8.500" strokeWidth="1.700" /></Icon>Rows</ShelfLabel>
              <Pill $w={148} $c={green}>SUM(TopSpeed KmH)</Pill>
            </Shelf>
            <View><Chart /></View>
          </Work>
        </Main>
        <Tabs />
        <Status />
        <Windows />
        <ShowMePanel />
      </Window>
    </>
  );
}
